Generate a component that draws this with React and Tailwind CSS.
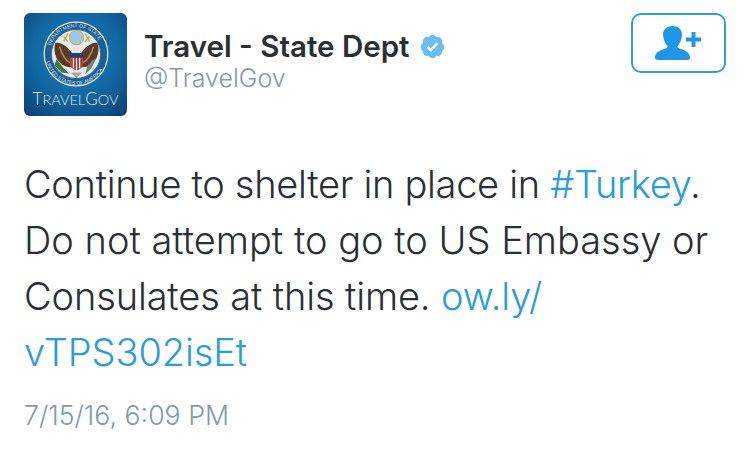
export default function App() {
  return (
    <div className="w-[749px] h-[456px] bg-white overflow-hidden font-['Inter','Open_Sans',sans-serif] pl-6 pt-[13px] pr-[23px]">
      <div className="flex items-start">
        <div className="w-[103px] h-[103px] rounded-[6px] shrink-0 flex flex-col items-center bg-[radial-gradient(circle_at_50%_40%,#1f7fc4_0%,#12669f_55%,#0a3f73_100%)]">
          <svg width="78" height="78" viewBox="0 0 76 76" className="mt-[2px]">
            <defs>
              <path id="ringTop" d="M12 38 a26 26 0 0 1 52 0" />
              <path id="ringBottom" d="M8 38 a30 30 0 0 0 60 0" />
            </defs>
            <circle cx="38" cy="38" r="31" fill="#1a5f98" stroke="#e4edf2" strokeWidth="1.2" />
            <text fontFamily="'Liberation Sans',sans-serif" fontSize="5" fill="#d5e3ec"><textPath href="#ringTop" startOffset="10%">DEPARTMENT OF STATE</textPath></text>
            <text fontFamily="'Liberation Sans',sans-serif" fontSize="5" fill="#d5e3ec"><textPath href="#ringBottom" startOffset="8%">UNITED STATES OF AMERICA</textPath></text>
            <circle cx="38" cy="38" r="24" fill="#e4ebee" stroke="#2f6f9f" strokeWidth="1" />
            <path d="M30 18 L26 26 M47 18 L51 26 M26 21 L30 26 M51 21 L47 26" stroke="#c9ad5e" strokeWidth="1.500" />
            <circle cx="38.500" cy="22" r="7" fill="#9cc9e0" stroke="#c9ad5e" strokeWidth="1" />
            <path d="M34 37 C28 28 22 27 18 27 C15 36 19 50 33 51 Z" fill="#5e3a25" />
            <path d="M43 37 C49 28 55 27 59 27 C62 36 58 50 44 51 Z" fill="#5e3a25" />
            <path d="M22 31 C24 38 27 44 33 47 M55 31 C53 38 50 44 44 47" stroke="#a88a62" strokeWidth="1.500" fill="none" />
            <path d="M35 31 h6 v6 h-6 Z" fill="#e9e4d2" />
            <path d="M32 37 h13 v10 c0 4 -3 6 -6.500 7 c-3.500 -1 -6.500 -3 -6.500 -7 Z" fill="#b5403f" />
            <path d="M32 37 h13 v4.500 h-13 Z" fill="#1f3f78" />
            <path d="M35.500 42v10M38.500 42v12M41.500 42v10" stroke="#f1f1f1" strokeWidth="1.100" />
            <path d="M19 43 l7 9 l5 5 l-7 -1 l-7 -7 Z" fill="#3f7a3a" />
            <path d="M58 42 l-5 10 l-6 6 l2 -8 l5 -6 Z" fill="#7b7f78" />
            <path d="M33 56 l5.500 5.500 l5.500 -5.500 Z" fill="#a8a79c" />
          </svg>
          <span className="mt-[-3px] text-[#dfe9f0] text-[14.500px] leading-[18px] font-light font-['Lato',sans-serif] whitespace-nowrap"><span className="text-[17px]">T</span>RAVEL<span className="text-[17px]">G</span>OV</span>
        </div>
        <div className="ml-[17px] mt-[16px] flex-1 min-w-0">
          <div className="flex items-center">
            <span className="text-[29.500px] leading-[34px] font-semibold text-[#292f33] whitespace-nowrap">Travel - State Dept</span>
            <svg width="27" height="27" viewBox="0 0 24 24" className="ml-[10px]">
              <path fill="#6cbdf5" d="M22.5 12.5c0-1.58-.875-2.95-2.148-3.6.154-.435.238-.905.238-1.4 0-2.21-1.71-3.998-3.818-3.998-.47 0-.92.084-1.336.25C14.818 2.415 13.51 1.5 12 1.5s-2.816.917-3.437 2.25c-.415-.165-.866-.25-1.336-.25-2.11 0-3.818 1.79-3.818 4 0 .494.083.964.237 1.4-1.272.65-2.147 2.018-2.147 3.6 0 1.495.782 2.798 1.942 3.486-.02.17-.032.34-.032.514 0 2.21 1.708 4 3.818 4 .47 0 .92-.086 1.335-.25.62 1.334 1.926 2.25 3.437 2.25 1.512 0 2.818-.916 3.437-2.25.415.163.865.248 1.336.248 2.11 0 3.818-1.79 3.818-4 0-.174-.012-.344-.033-.513 1.158-.687 1.943-1.99 1.943-3.484z" />
              <path fill="#fff" d="M10.5 16.9l-3.7-3.7 1.6-1.6 2.1 2.1 4.9-5.3 1.7 1.5z" />
            </svg>
          </div>
          <div className="text-[25px] leading-[30px] text-[#8899a6] font-light">@TravelGov</div>
        </div>
        <div className="w-[95px] h-[60px] shrink-0 rounded-[10px] border-2 border-[#2d9de6] flex items-center justify-center">
          <svg width="46" height="34" viewBox="0 0 46 34" className="mr-[1px]">
            <path fill="#2196e8" d="M17.500 0c5.500 0 9.500 3.500 9.500 8.500 0 4-1.800 8.500-4 11-.8.900-.5 2 .4 2.500 3.500 1.800 11.600 2.800 11.600 9.500 0 1.700-1 2.500-2.500 2.500H2.500C1 34 0 33.200 0 31.500 0 24.800 8.100 23.800 11.600 22c.9-.5 1.200-1.600.4-2.500-2.200-2.500-4-7-4-11C8 3.500 12 0 17.500 0z" />
            <path stroke="#2196e8" strokeWidth="4" d="M31 13.500h15M38.500 6v15" />
          </svg>
        </div>
      </div>
      <div className="mt-[40px] text-[38px] leading-[56px] text-[#292f33] font-light whitespace-nowrap">
        <div className="tracking-[-0.3px]">Continue to shelter in place in <span className="text-[#2b9be0]">#Turkey</span>.</div>
        <div>Do not attempt to go to US Embassy or</div>
        <div className="tracking-[-0.13px]">Consulates at this time. <span className="text-[#2b9be0]">ow.ly/</span></div>
        <div className="tracking-[-0.1px] text-[#2b9be0]">vTPS302isEt</div>
      </div>
      <div className="mt-[20px] text-[26.700px] leading-[30px] text-[#8899a6] font-light">7/15/16, 6:09 PM</div>
    </div>
  );
}
